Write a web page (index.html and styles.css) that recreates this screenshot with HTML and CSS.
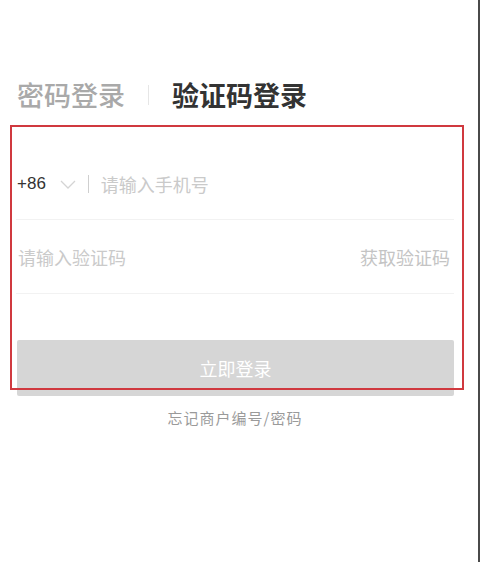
FILE: index.html
```html
<!DOCTYPE html>
<html lang="zh-CN">
  <head>
    <meta charset="UTF-8" />
    <meta name="viewport" content="width=device-width, initial-scale=1.0" />
    <title>验证码登录</title>
    <link rel="stylesheet" href="styles.css">
  </head>
  <body>
    <div class="page">
      <div class="tabs">
        <span class="tab">密码登录</span>
        <span class="tab-sep"></span>
        <span class="tab active">验证码登录</span>
      </div>

      <form class="login-form">
        <!-- phone row -->
        <div class="field phone-field">
          <span class="area-code">+86</span>
          <svg class="chevron" width="16" height="9" viewBox="0 0 16 9">
            <polyline points="1,1 8,8 15,1" fill="none" stroke="#d4d4d4" stroke-width="1.3" />
          </svg>
          <span class="field-sep"></span>
          <input type="text" class="field-input" placeholder="请输入手机号" />
        </div>

        <!-- code row -->
        <div class="field code-field">
          <input type="text" class="field-input" placeholder="请输入验证码" />
          <button type="button" class="get-code">获取验证码</button>
        </div>

        <button type="submit" class="submit-btn">立即登录</button>
        <a class="forgot" href="#">忘记商户编号/密码</a>
      </form>

      <div class="highlight"></div>
    </div>
  </body>
</html>
```

FILE: styles.css
```css
body {
  margin: 0;
  padding: 0;
  background-color: #ffffff;
  font-family: "Noto Sans CJK SC", "Noto Sans", sans-serif;
}
.page {
  position: relative;
  width: 480px;
  height: 562px;
  box-sizing: border-box;
  border-right: 2px solid #4a4a4a;
  padding-right: 1px;
}
.tabs {
  display: flex;
  align-items: center;
  padding: 77px 0 0 17px;
  height: 36px;
}
.tab {
  font-size: 27px;
  line-height: 36px;
  color: #a9a9a9;
  font-weight: 500;
}
.tab.active {
  color: #333333;
  font-weight: 700;
}
.tab-sep {
  width: 1px;
  height: 20px;
  background-color: #e6e6e6;
  margin: 0 23px 0 23px;
}
.login-form {
  display: flex;
  flex-direction: column;
  padding: 36px 23px 0 16px;
}
.field {
  display: flex;
  align-items: center;
  border-bottom: 1px solid #f2f2f2;
}
.phone-field {
  height: 70px;
}
.code-field {
  height: 73px;
}
.area-code {
  font-family: "Liberation Sans", Arial, sans-serif;
  font-size: 17px;
  font-weight: 500;
  color: #333333;
  margin-left: 1px;
}
.chevron {
  margin: 0 12px 0 14px;
}
.field-sep {
  width: 1px;
  height: 18px;
  background-color: #cfcfcf;
  margin-right: 12px;
}
.field-input {
  flex: 1;
  border: none;
  outline: none;
  padding: 0;
  font-family: inherit;
  font-size: 18px;
  color: #333333;
  background: transparent;
}
.field-input::placeholder {
  color: #cacaca;
}
.code-field .field-input {
  margin-left: 2px;
}
.get-code {
  border: none;
  background: none;
  padding: 0;
  margin-right: 4px;
  font-family: inherit;
  font-size: 18px;
  color: #c4c4c4;
  cursor: pointer;
}
.submit-btn {
  margin-top: 46px;
  height: 56px;
  border: none;
  border-radius: 2px;
  background-color: #d6d6d6;
  color: #ffffff;
  font-family: inherit;
  font-size: 18px;
  cursor: pointer;
  margin-left: 1px;
}
.forgot {
  align-self: center;
  margin-top: 12px;
  font-size: 15px;
  line-height: 20px;
  letter-spacing: 1px;
  color: #9a9a9a;
  text-decoration: none;
}
/* red annotation box over the form */
.highlight {
  position: absolute;
  left: 10px;
  top: 125px;
  width: 450px;
  height: 261px;
  border: 2px solid #d0393f;
  pointer-events: none;
}
```
